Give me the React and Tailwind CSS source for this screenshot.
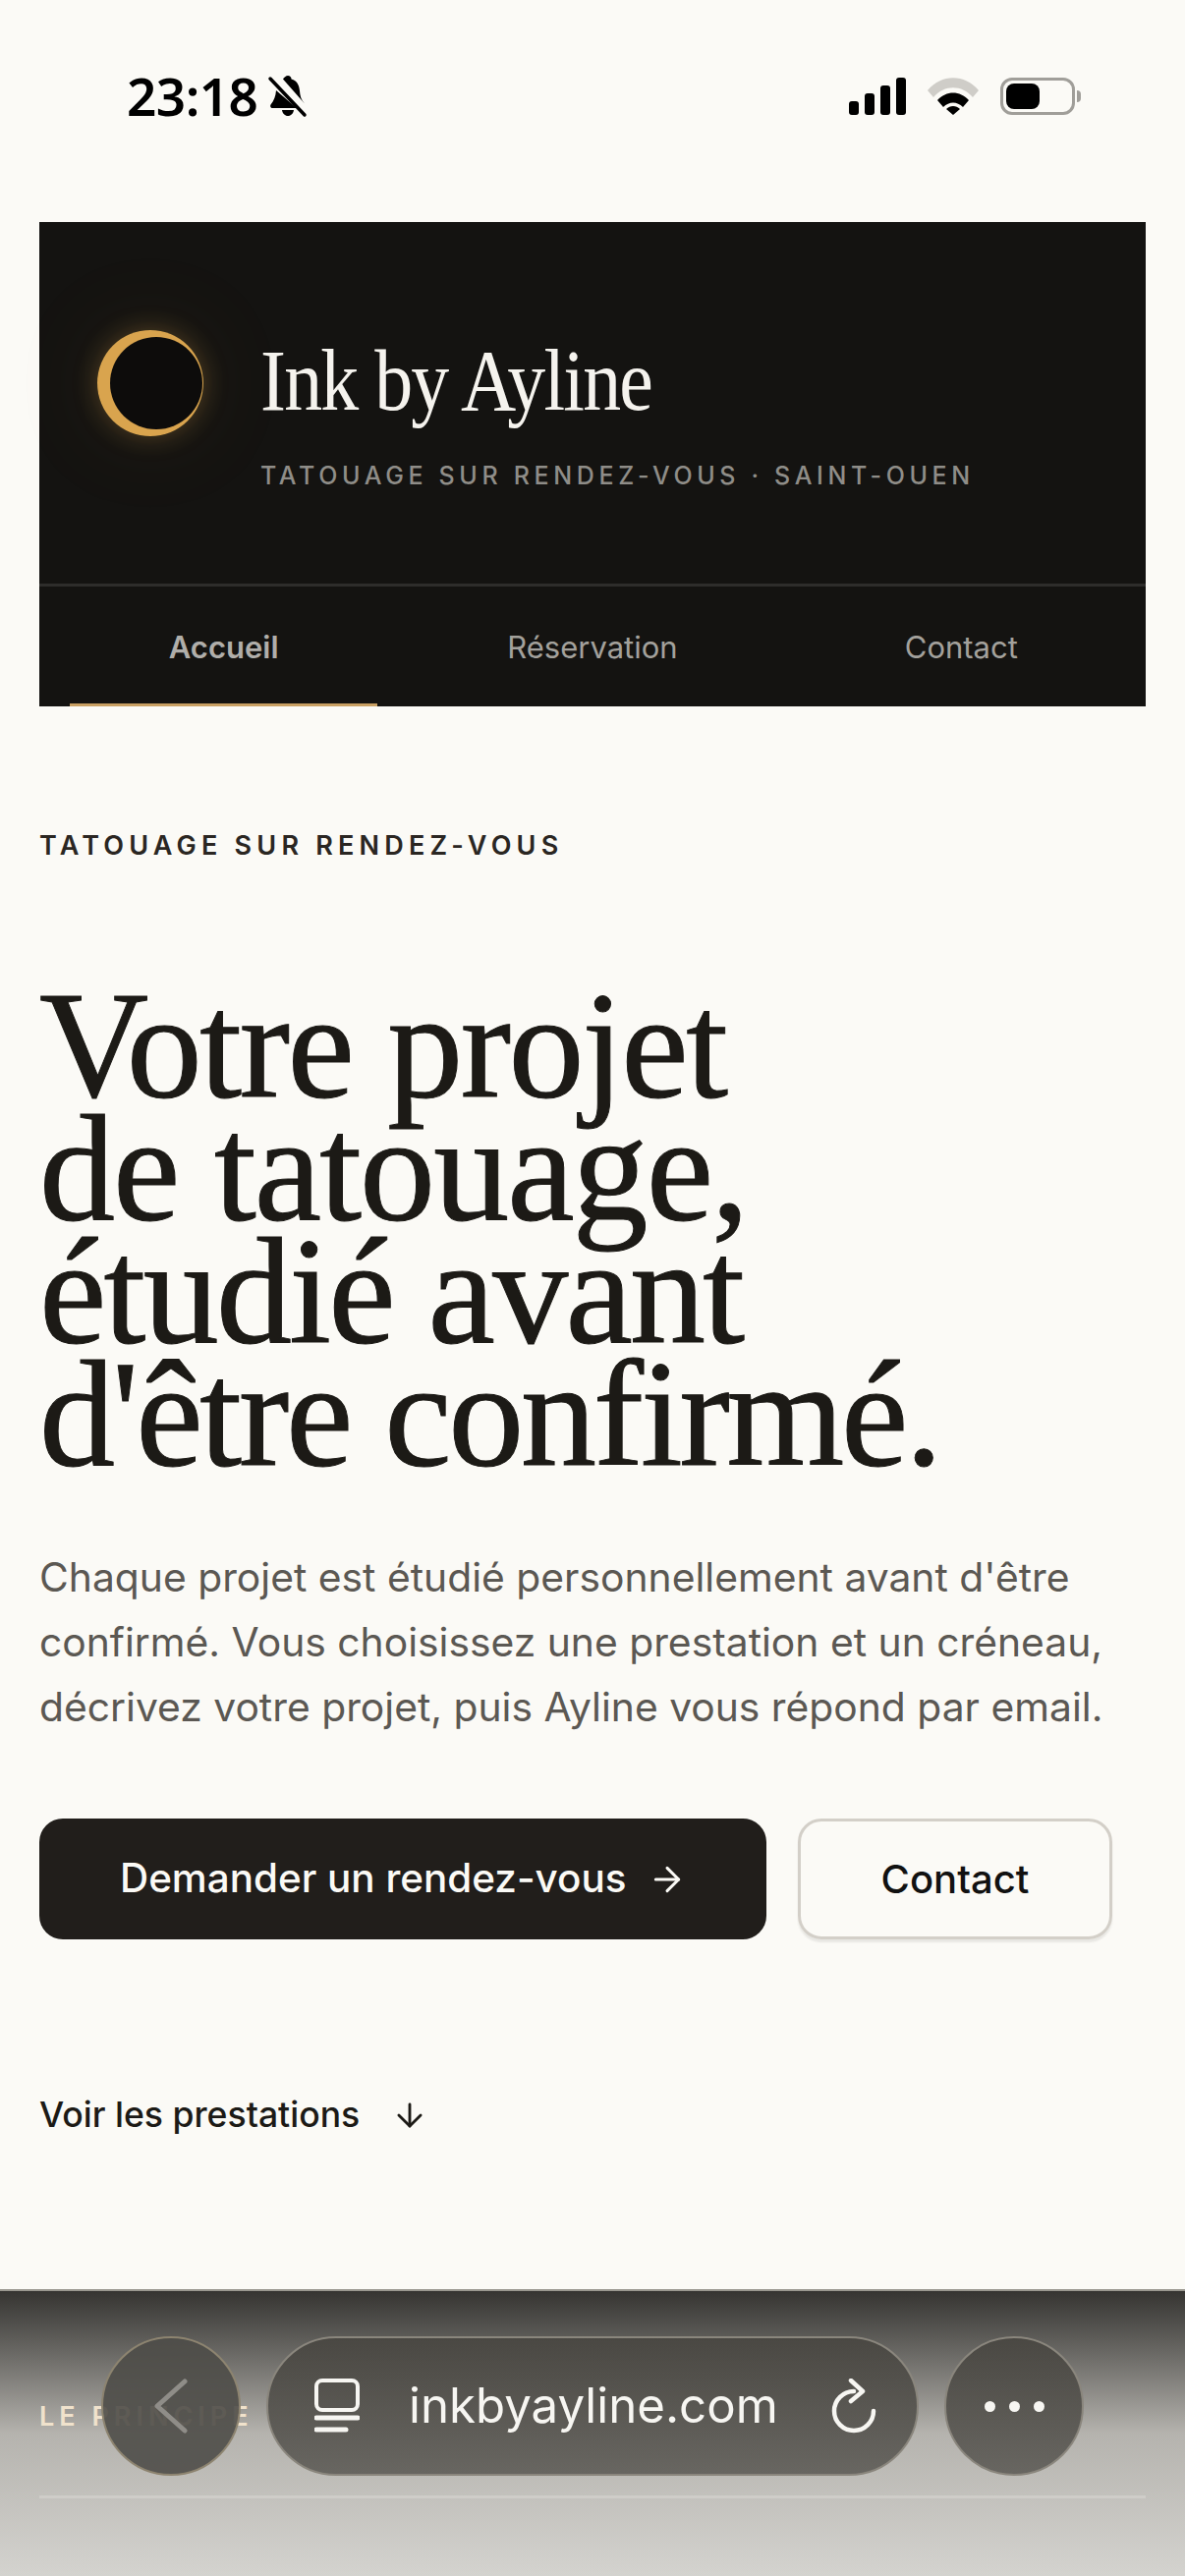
import React from 'react';
import { ArrowRight, ArrowDown } from 'lucide-react';

const serif = "font-['Liberation_Serif',serif]";

const StatusBar = () => (
    <div className="flex h-[226px] items-start justify-between pl-[129px] pr-[106px] pt-[72px]">
        <div className="flex items-center gap-[10px]">
            <span className="text-[53px] font-semibold leading-[52px] tracking-[-0.5px] text-black">23:18</span>
            <svg width="42" height="44" viewBox="0 0 42 44" fill="#000">
                <path d="M21 1c2 0 3.500 1.500 3.500 3.500 6 1.500 8 6.500 8.500 12 .3 5 1.500 9 5 13l-22-25c1-1.500 3-3.500 5-3.500z" />
                <path d="M9 16l21 18H5c-1.500 0-2.500-2-1.500-3.500C7 26 8.500 22 9 16z" />
                <path d="M15 36h12c-.5 3.500-3 6-6 6s-5.500-2.500-6-6z" />
                <path d="M3 4L38 41" stroke="#000" strokeWidth="3.500" strokeLinecap="round" />
            </svg>
        </div>
        <div className="flex items-center gap-[22px] pt-[7px]">
            <svg width="58" height="38" viewBox="0 0 58 38" fill="#000">
                <rect x="0" y="24" width="10" height="14" rx="3" />
                <rect x="16" y="16" width="10" height="22" rx="3" />
                <rect x="32" y="8" width="10" height="30" rx="3" />
                <rect x="48" y="0" width="10" height="38" rx="3" />
            </svg>
            <svg width="52" height="38" viewBox="0 0 52 38">
                <path d="M0 13C14 -4 38 -4 52 13l-6 7C35 7 17 7 6 20z" fill="#cfcdc8" />
                <path d="M10 23c9-10 23-10 32 0l-6 7c-6-6-14-6-20 0z" fill="#000" />
                <path d="M19 32c4-4 10-4 14 0l-7 6z" fill="#000" />
            </svg>
            <div className="flex items-center gap-[2px]">
                <div className="flex h-[38px] w-[76px] items-center rounded-[12px] border-[3px] border-[#a09e99] p-[3px]">
                    <div className="h-full w-[34px] rounded-[8px] bg-black"></div>
                </div>
                <div className="h-[12px] w-[4px] rounded-r-full bg-[#a09e99]"></div>
            </div>
        </div>
    </div>
);

const Brand = () => (
    <div className="mx-10 bg-[#141311]">
        <div className="flex h-[368px] items-start pl-[59px] pt-[110px]">
            <div className="size-[108px] shrink-0 rounded-full shadow-[0_0_26px_rgba(217,164,78,0.3),0_0_110px_rgba(217,164,78,0.09)]">
                <svg width="108" height="108" viewBox="0 0 108 108">
                    <circle cx="54" cy="54" r="54" fill="#d9a44e" />
                    <circle cx="60" cy="54" r="47" fill="#0d0c0b" />
                </svg>
            </div>
            <div className="ml-[58px] flex flex-col pt-[2px]">
                <div className={`${serif} origin-left scale-x-[0.885] whitespace-nowrap text-[88px] leading-[100px] tracking-[-2px] text-[#f5f3ee]`}>Ink by Ayline</div>
                <div className="mt-[31px] whitespace-nowrap font-['Inter',sans-serif] text-[25px] font-medium leading-[30px] tracking-[4.65px] text-[#8f8d88]">TATOUAGE SUR RENDEZ-VOUS · SAINT-OUEN</div>
            </div>
        </div>
        <nav className="grid h-[125px] grid-cols-3 border-t-[3px] border-[#2e2d2b] font-['Inter',sans-serif] text-[31px] text-[#a3a19c]">
            <div className="mx-[31px] flex items-center justify-center border-b-[3px] border-[#c9a063] pt-[6px] font-semibold text-[#b0aeaa]">Accueil</div>
            <div className="flex items-center justify-center pt-[3px]">Réservation</div>
            <div className="flex items-center justify-center pt-[3px]">Contact</div>
        </nav>
    </div>
);

const Hero = () => (
    <div className="px-10 font-['Inter',sans-serif]">
        <div className="mt-[126px] text-[27px] font-semibold leading-[32px] tracking-[5.2px] text-[#2a2622]">TATOUAGE SUR RENDEZ-VOUS</div>
        <h1 className={`${serif} mt-[125px] whitespace-nowrap text-[154px] leading-[125px] tracking-[-2.5px] text-[#1c1a16] [-webkit-text-stroke:1px_#1c1a16]`}>
            Votre projet<br />
            <span className="tracking-[-1.95px]">de tatouage,</span><br />
            <span className="tracking-[-2.75px]">étudié avant</span><br />
            <span className="tracking-[-3.25px]">d'être confirmé.</span>
        </h1>
        <p className="mt-[70px] text-[40.8px] leading-[66px] text-[#5b5853]">
            Chaque projet est étudié personnellement avant d'être confirmé. Vous choisissez une prestation et un créneau, décrivez votre projet, puis Ayline vous répond par email.
        </p>
        <div className="mt-[81px] flex gap-[32px]">
            <a className="flex h-[123px] w-[740px] items-center gap-[22px] rounded-[24px] bg-[#211e1b] pl-[82px] text-[40.4px] font-medium text-[#fbfaf6]">
                Demander un rendez-vous
                <ArrowRight size={40} strokeWidth={1.8} />
            </a>
            <a className="flex h-[123px] w-[320px] items-center justify-center rounded-[24px] border-[3px] border-[#d3cfc8] text-[40px] font-medium text-[#111] shadow-[0_3px_2px_rgba(0,0,0,0.08)]">Contact</a>
        </div>
        <div className="mt-[157px] flex items-center gap-[32px] text-[35.6px] font-medium leading-[44px] text-[#1c1a16]">
            Voir les prestations
            <ArrowDown size={38} strokeWidth={1.8} />
        </div>
    </div>
);

const BrowserBar = () => (
    <div className="absolute inset-x-0 bottom-0 h-[292px] border-t-2 border-[#9a9890] bg-gradient-to-b from-[#363532] via-[#b5b3ae] via-50% to-[#d4d3cf]">
        <div className="absolute left-10 top-[108px] font-['Inter',sans-serif] text-[27px] font-semibold tracking-[5px] text-[#f0e2cc]">LE PRINCIPE</div>
        <div className="absolute inset-x-10 top-[208px] h-[3px] bg-[#cfcdc9]"></div>
        <div className="absolute inset-x-0 top-[46px] flex gap-[26px] pl-[103px]">
            <div className="flex size-[142px] items-center justify-center rounded-full border-2 border-[#8d8470] bg-[#4e4c48]/90">
                <svg width="40" height="56" viewBox="0 0 40 56" fill="none" stroke="#8f8d88" strokeWidth="5" strokeLinecap="round" strokeLinejoin="round">
                    <path d="M34 3L6 28l28 25" />
                </svg>
            </div>
            <div className="flex h-[142px] w-[664px] items-center rounded-full border-2 border-[#8a867d] bg-gradient-to-b from-[#4a4843] to-[#686661] pl-[47px] pr-[41px]">
                <svg width="46" height="56" viewBox="0 0 46 56" fill="none" stroke="#f7f6f2" strokeLinecap="round">
                    <rect x="2" y="2" width="42" height="30" rx="6" strokeWidth="4" />
                    <path d="M2 40h42" strokeWidth="5" />
                    <path d="M2 52h30" strokeWidth="5" />
                </svg>
                <span className="ml-[50px] flex-1 font-['Inter',sans-serif] text-[49.2px] leading-none text-[#f7f6f2]">inkbyayline.com</span>
                <svg width="46" height="56" viewBox="0 0 46 56" fill="none" stroke="#f7f6f2" strokeWidth="4.500" strokeLinecap="round" strokeLinejoin="round">
                    <path d="M23 13a20 20 0 1 0 20 20" />
                    <path d="M20 2l12 11-12 10" />
                </svg>
            </div>
            <div className="flex size-[142px] items-center justify-center gap-[14px] rounded-full border-2 border-[#8a867d] bg-gradient-to-b from-[#4a4843] to-[#686661]">
                <div className="size-[11px] rounded-full bg-[#f7f6f2]"></div>
                <div className="size-[11px] rounded-full bg-[#f7f6f2]"></div>
                <div className="size-[11px] rounded-full bg-[#f7f6f2]"></div>
            </div>
        </div>
    </div>
);

const App = () => {
    return (
        <div className="relative h-[2622px] w-[1206px] overflow-hidden bg-[#fbfaf6]">
            <StatusBar />
            <Brand />
            <Hero />
            <BrowserBar />
        </div>
    );
};

export default App;
